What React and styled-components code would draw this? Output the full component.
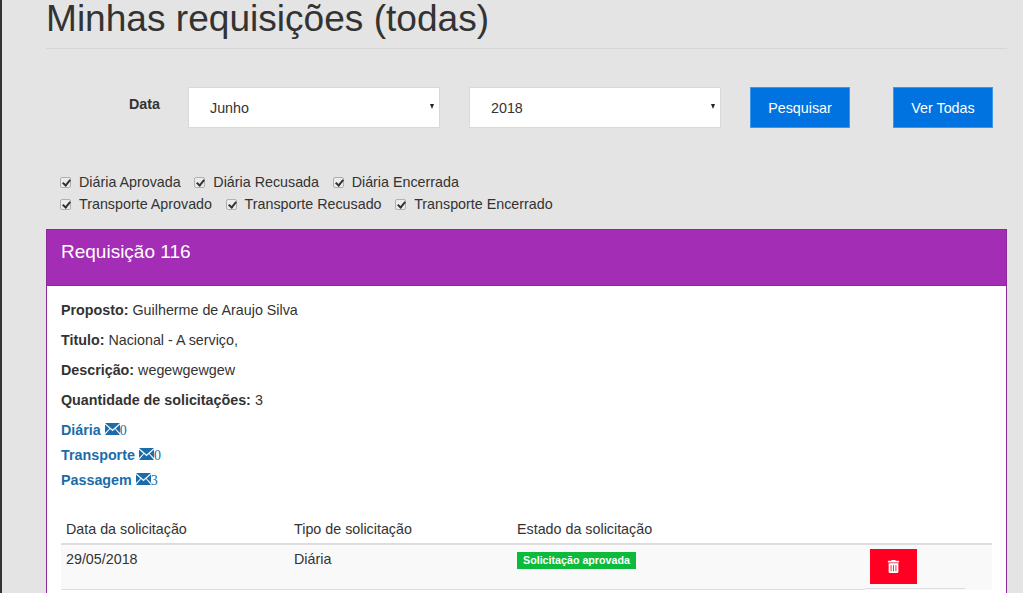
import styled, { createGlobalStyle } from 'styled-components'
import { FaTrashAlt } from 'react-icons/fa'

const GlobalStyle = createGlobalStyle`
html, body {
    margin: 0;
    height: 593px;
    overflow: hidden;
    background: #e4e4e4;
    font-family: "Liberation Sans", Arial, sans-serif;
    font-size: 14.3px;
    line-height: 20px;
    color: #333;
}
* { box-sizing: border-box; }
`

const filtros = [
    ['Diária Aprovada', 'Diária Recusada', 'Diária Encerrada'],
    ['Transporte Aprovado', 'Transporte Recusado', 'Transporte Encerrado'],
]

const detalhes = [
    ['Proposto:', 'Guilherme de Araujo Silva'],
    ['Titulo:', 'Nacional - A serviço,'],
    ['Descrição:', 'wegewgewgew'],
    ['Quantidade de solicitações:', '3'],
]

const links = [
    ['Diária', 0],
    ['Transporte', 0],
    ['Passagem', 3],
]

const Envelope = () => (
    <svg width="15" height="12" viewBox="0 0 15 12" fill="currentColor">
        <path d="M0 0h15L7.5 6.6z" />
        <path d="M0 1.4l4.4 4L0 10z" />
        <path d="M15 1.4l-4.4 4L15 10z" />
        <path d="M5 6l2.5 2.2L10 6l5 6H0z" />
    </svg>
)

const App = () => {
    return (
        <Page>
            <GlobalStyle />
            <Title>Minhas requisições (todas)</Title>

            <SearchForm>
                <DataLabel>Data</DataLabel>
                <SelectBox>
                    <Select defaultValue="Junho">
                        <option>Junho</option>
                    </Select>
                </SelectBox>
                <SelectBox>
                    <Select defaultValue="2018">
                        <option>2018</option>
                    </Select>
                </SelectBox>
                <BlueButton>Pesquisar</BlueButton>
                <BlueButton>Ver Todas</BlueButton>
            </SearchForm>

            <Filters>
                {filtros.map((linha, i) => (
                    <FilterRow key={i}>
                        {linha.map((nome) => (
                            <FilterLabel key={nome}>
                                <Check type="checkbox" defaultChecked />
                                {nome}
                            </FilterLabel>
                        ))}
                    </FilterRow>
                ))}
            </Filters>

            <Panel>
                <PanelHeading>Requisição 116</PanelHeading>
                <PanelBody>
                    {detalhes.map(([nome, valor]) => (
                        <Detail key={nome}>
                            <strong>{nome}</strong> {valor}
                        </Detail>
                    ))}

                    <LinkList>
                        {links.map(([nome, qtd]) => (
                            <RequestLink href="#" key={nome}>
                                {nome} <Envelope /><Count>{qtd}</Count>
                            </RequestLink>
                        ))}
                    </LinkList>

                    <Table>
                        <thead>
                            <tr>
                                <Th $w={228}>Data da solicitação</Th>
                                <Th $w={223}>Tipo de solicitação</Th>
                                <Th $w={353}>Estado da solicitação</Th>
                                <Th />
                            </tr>
                        </thead>
                        <tbody>
                            <tr>
                                <Td>29/05/2018</Td>
                                <Td>Diária</Td>
                                <Td>
                                    <Badge>Solicitação aprovada</Badge>
                                </Td>
                                <ActionTd>
                                    <DeleteButton aria-label="Excluir">
                                        <FaTrashAlt />
                                    </DeleteButton>
                                </ActionTd>
                            </tr>
                        </tbody>
                    </Table>
                </PanelBody>
            </Panel>
        </Page>
    )
}

export default App

const Page = styled.div`
height: 593px;
overflow: hidden;
border-left: 2px solid #333;
padding-left: 44px;
padding-right: 16px;
`

const Title = styled.h1`
margin: 0;
height: 49px;
border-bottom: 1px solid #d6d6d6;
font-size: 37.1px;
font-weight: 400;
line-height: 36px;
color: #333;
`

const SearchForm = styled.div`
display: flex;
align-items: flex-start;
margin-top: 38px;
padding-left: 83px;
`

const DataLabel = styled.label`
flex: none;
width: 59px;
font-weight: 700;
line-height: 35px;
`

const SelectBox = styled.div`
position: relative;
flex: none;
width: 252px;
margin-right: 29px;

&::after {
    content: '';
    position: absolute;
    right: 6px;
    top: 17px;
    border-left: 2.5px solid transparent;
    border-right: 2.5px solid transparent;
    border-top: 5px solid #222;
}
`

const Select = styled.select`
display: block;
appearance: none;
width: 100%;
height: 41px;
padding: 0 0 0 21px;
background: #fff;
border: 1px solid #d9d9d9;
border-radius: 0;
font-family: inherit;
font-size: 14.3px;
color: #333;
`

const BlueButton = styled.button`
flex: none;
width: 100px;
height: 41px;
margin-right: 43px;
padding: 0;
background: #0073e0;
border: 1px solid #3d96ea;
border-radius: 0;
font-family: inherit;
font-size: 14.3px;
color: #fff;
`

const Filters = styled.div`
margin-top: 43px;
padding-left: 14px;
`

const FilterRow = styled.div`
display: flex;
height: 22px;
align-items: center;
gap: 13.6px;
`

const FilterLabel = styled.label`
display: flex;
align-items: center;
`

const Check = styled.input`
appearance: none;
position: relative;
width: 11px;
height: 11px;
margin: 0 8px 0 0;
background: #ececec;
border: 1px solid #b0b0b0;
border-radius: 2px;

&:checked::after {
    content: '';
    position: absolute;
    left: 3px;
    top: 0;
    width: 3px;
    height: 6px;
    border: solid #333;
    border-width: 0 2px 2px 0;
    transform: rotate(40deg);
}
`

const Panel = styled.section`
margin-top: 14px;
background: #fff;
border: 1px solid #8a2a9c;
`

const PanelHeading = styled.div`
height: 56px;
padding: 11px 14px;
background: #a32db5;
border-bottom: 1px solid #8a2a9c;
font-size: 19px;
line-height: 22px;
color: #fff;
`

const PanelBody = styled.div`
padding: 14px 14px 15px;
`

const Detail = styled.p`
margin: 0 0 10px;
`

const LinkList = styled.div`
display: flex;
flex-direction: column;
align-items: flex-start;
`

const RequestLink = styled.a`
height: 25px;
font-weight: 700;
color: #1b6ca8;
text-decoration: none;

svg {
    vertical-align: 0;
}
`

const Count = styled.span`
font-family: "Liberation Serif", serif;
font-size: 14px;
font-weight: 400;
`

const Table = styled.table`
width: 100%;
margin-top: 19px;
border-collapse: collapse;
`

const Th = styled.th`
width: ${(props) => (props.$w ? props.$w + 'px' : 'auto')};
padding: 5px 5px 4px;
border-bottom: 2px solid #ddd;
font-weight: 400;
text-align: left;
vertical-align: top;
`

const Td = styled.td`
height: 45px;
padding: 4px 5px;
background: #f9f9f9;
border-bottom: 1px solid #ddd;
vertical-align: top;
`

const ActionTd = styled(Td)`
padding: 4px 5px 0;
border-bottom-color: #f9f9f9;
background: linear-gradient(#ddd, #ddd) left bottom / 100px 1px no-repeat, #f9f9f9;
`

const Badge = styled.span`
display: inline-block;
margin-top: 3px;
padding: 0 6px;
background: #0cbb3c;
font-size: 10.7px;
font-weight: 700;
line-height: 17px;
vertical-align: top;
color: #fff;
`

const DeleteButton = styled.button`
display: flex;
align-items: center;
justify-content: center;
width: 47px;
height: 35px;
padding: 0;
background: #ff0022;
border: 0;
border-radius: 0;
font-size: 13px;
color: #fff;
`
